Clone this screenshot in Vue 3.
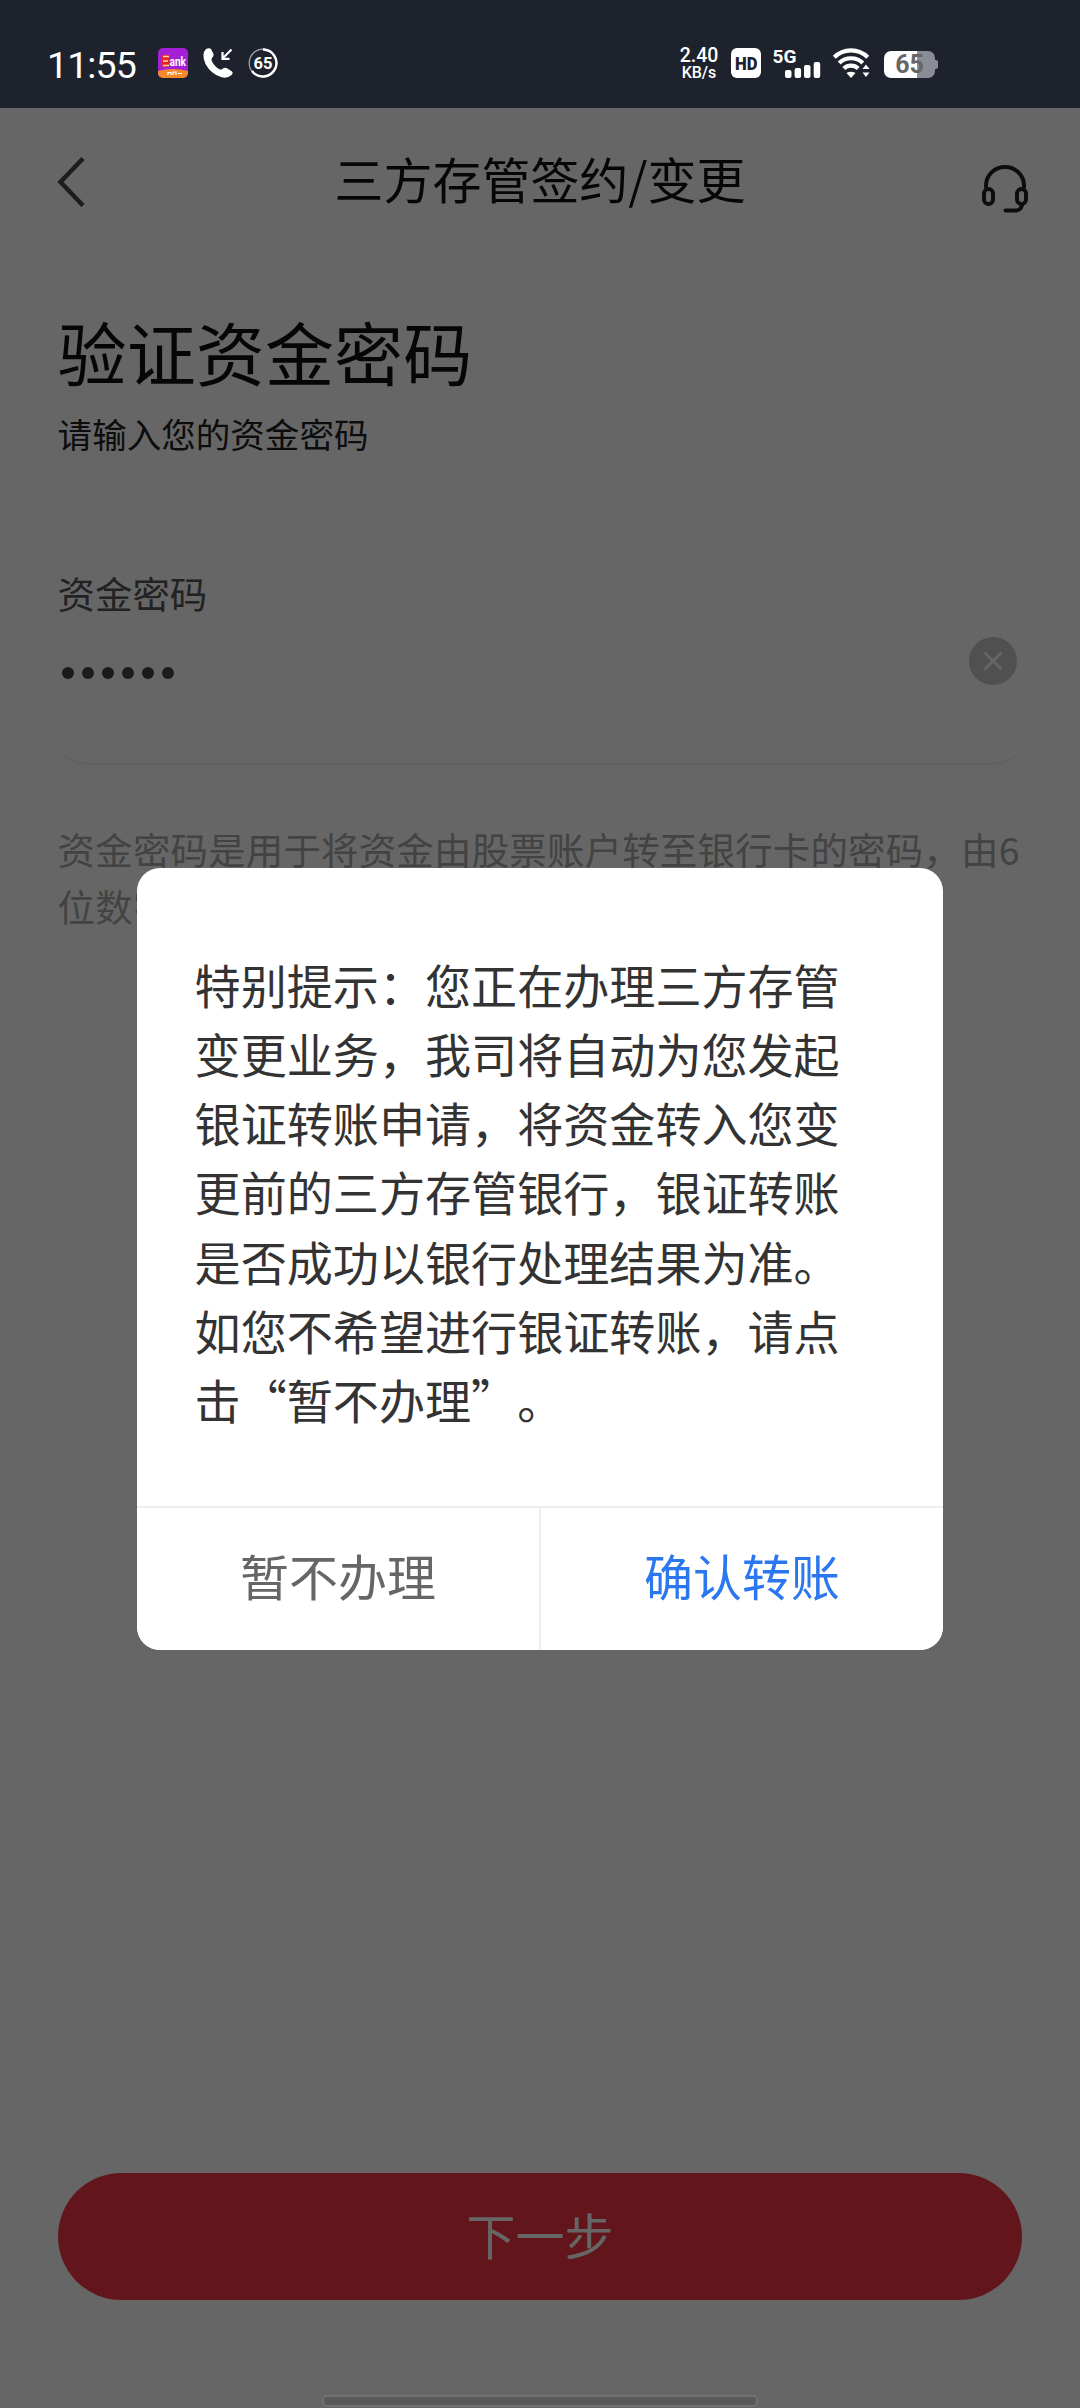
<script setup>
import { ref } from 'vue';

const isOpen = ref(true);
const password = ref('123456');

const hint = '资金密码是用于将资金由股票账户转至银行卡的密码\uff0c由6位数字组成';

const notice =
  '特别提示\uff1a您正在办理三方存管变更业务\uff0c我司将自动为您发起银证转账申请\uff0c' +
  '将资金转入您变更前的三方存管银行\uff0c银证转账是否成功以银行处理结果为准。' +
  '如您不希望进行银证转账\uff0c请点击\u201c暂不办理\u201d。';

const closeModal = () => {
  isOpen.value = false;
};

const clearPassword = () => {
  password.value = '';
};
</script>

<template>
  <div class="screen">
    <header class="status-bar">
      <div class="status-left">
        <span class="clock">11:55</span>
        <svg class="app-icon" width="30" height="30" viewBox="0 0 30 30">
          <defs>
            <clipPath id="app-clip"><rect width="30" height="30" rx="5" /></clipPath>
          </defs>
          <g clip-path="url(#app-clip)">
            <rect width="30" height="30" fill="#a51fd6" />
            <path d="M0 23 Q15 19 30 23 V30 H0 Z" fill="#f58a2c" />
            <rect x="3" y="7" width="8" height="12" fill="#e0252b" />
            <path d="M5 8.500h6M5 13h5M5 17.500h6" stroke="#ffd9a0" stroke-width="1.500" />
            <text x="11.500" y="17.800" textLength="16.500" lengthAdjust="spacingAndGlyphs" class="app-name">ank</text>
            <path d="M10 27v-2.500h3V27M15 27v-3h3V27M20 25.500h4" stroke="#fff" stroke-width="1.200" fill="none" />
          </g>
        </svg>
        <svg class="phone-icon" width="30" height="30" viewBox="0 0 30 30">
          <path d="M3 1 Q6 -.5 8 1 L10.500 6 Q11 8.500 9 10 Q8 11 9 13.500 Q12 19 16 21 Q18.500 22.300 20 20.500 Q22 19.200 24 20.300 L29 23.500 Q30.500 25 28.500 27 Q24 31 18 29 Q8 26 2.500 16 Q-2 6 3 1Z" fill="#fff" />
          <path d="M28.500 1.500 L19.500 10.500 M19.500 4 V10.800 H26.500" fill="none" stroke="#fff" stroke-width="2.200" />
        </svg>
        <svg class="ring-icon" width="30" height="30" viewBox="0 0 30 30">
          <circle cx="15" cy="15" r="13.800" fill="none" stroke="#a5a7ac" stroke-width="1.200" />
          <path d="M15 1.500 A13.500 13.500 0 1 1 4 23" fill="none" stroke="#fff" stroke-width="2.400" />
          <text x="15" y="20.800" text-anchor="middle" class="ring-text">65</text>
        </svg>
      </div>
      <div class="status-right">
        <div class="speed"><span class="speed-num">2.40</span><span class="speed-unit">KB/s</span></div>
        <div class="hd">
          <svg width="30" height="30" viewBox="0 0 30 30">
            <text x="4" y="21.800" textLength="22.500" lengthAdjust="spacingAndGlyphs" class="hd-text">HD</text>
          </svg>
        </div>
        <svg class="signal" width="48" height="30" viewBox="0 0 48 30">
          <text x="-.5" y="14.500" class="signal-text">5G</text>
          <g fill="#fff">
            <rect x="12" y="22" width="6.500" height="8" rx="2" />
            <rect x="21.600" y="20" width="6.500" height="10" rx="2" />
            <rect x="31" y="17" width="6.500" height="13" rx="2" />
            <rect x="40.700" y="14" width="6.500" height="16" rx="2" />
          </g>
        </svg>
        <svg class="wifi" width="37" height="30" viewBox="0 0 37 30">
          <g fill="none" stroke="#fff" stroke-width="4.200">
            <path d="M1.300 9.300 A23.500 23.500 0 0 1 34.700 9.300" />
            <path d="M6.200 15 A17 17 0 0 1 29.800 15" />
            <path d="M10.800 20.500 A10.500 10.500 0 0 1 25.200 20.500" />
          </g>
          <path d="M13.500 25 Q18 22.500 22.500 25 L18 30Z" fill="#fff" />
          <path d="M29.500 21 L33 16.500 L36.500 21Z M29.500 24.500 H36.500 L33 29Z" fill="#fff" />
        </svg>
        <div class="battery"><div class="battery-body">65</div><i class="battery-tip"></i></div>
      </div>
    </header>

    <div class="page">
      <nav class="nav-bar">
        <svg class="back" width="30" height="54" viewBox="0 0 30 54">
          <path d="M27 3.500 L4.500 27 L27 50.500" fill="none" stroke="#4a4a4a" stroke-width="4.500" />
        </svg>
        <h1 class="nav-title">三方存管签约/变更</h1>
        <svg class="service" width="48" height="48" viewBox="0 0 48 48">
          <g fill="none" stroke="#222" stroke-width="4" stroke-linecap="round">
            <path d="M5 22 V20.500 A19 18.500 0 0 1 43 20.500 V22" />
            <rect x="3" y="24" width="9" height="15" rx="4.500" />
            <rect x="36" y="24" width="9" height="15" rx="4.500" />
            <path d="M41 40 Q40 45.500 34.500 45.500 H24.500" />
          </g>
        </svg>
      </nav>

      <main class="content">
        <h2 class="heading">验证资金密码</h2>
        <p class="sub">请输入您的资金密码</p>

        <div class="field-clip">
          <section class="field">
            <label class="field-label">资金密码</label>
            <div class="field-row">
              <div class="dots"><i v-for="n in password.length" :key="n" class="dot"></i></div>
              <svg class="clear" width="48" height="48" viewBox="0 0 48 48" @click="clearPassword">
                <circle cx="24" cy="24" r="24" fill="#c9c9c9" />
                <path d="M15.500 15.500 L32.500 32.500 M32.500 15.500 L15.500 32.500" stroke="#fafafa" stroke-width="3" />
              </svg>
            </div>
          </section>
        </div>

        <p class="hint">{{ hint }}</p>
      </main>

      <button class="next">下一步</button>
      <div class="home-bar"></div>
    </div>

    <div v-if="isOpen" class="modal-overlay">
      <div class="modal">
        <p class="modal-text">{{ notice }}</p>
        <div class="modal-actions">
          <button class="btn btn-cancel" @click="closeModal">暂不办理</button>
          <button class="btn btn-ok" @click="closeModal">确认转账</button>
        </div>
      </div>
    </div>
  </div>
</template>

<style>
body {
  margin: 0;
  background: #fff;
}
</style>

<style scoped>
.screen {
  position: relative;
  display: flex;
  flex-direction: column;
  width: 1080px;
  height: 2408px;
  overflow: hidden;
  font-family: "Noto Sans CJK SC", sans-serif;
  font-weight: 400;
  text-spacing-trim: space-all;
}

h1,
h2,
p {
  margin: 0;
  font-weight: inherit;
}

button {
  border: none;
  padding: 0;
  font: inherit;
}

svg {
  display: block;
  overflow: visible;
  flex: none;
}

/* status bar */
.status-bar {
  display: flex;
  justify-content: space-between;
  box-sizing: border-box;
  height: 108px;
  padding: 48px 142px 0 47px;
  background: #1e222d;
  color: #fff;
  font-family: Roboto, sans-serif;
}

.status-left,
.status-right {
  display: flex;
  height: 30px;
}

.clock {
  width: 111px;
  font-size: 37.500px;
  font-weight: 400;
  line-height: 34px;
  letter-spacing: -0.900px;
}

.phone-icon {
  margin-left: 15px;
}

.ring-icon {
  margin-left: 15px;
}

.app-name {
  fill: #fff;
  font: 700 12px Roboto, sans-serif;
}

.ring-text {
  fill: #fff;
  font: 700 16.500px Roboto, sans-serif;
}

.speed {
  display: flex;
  flex-direction: column;
  align-items: center;
  width: 40px;
  margin-right: 12px;
  font-weight: 500;
}

.speed-num {
  font-size: 19.500px;
  line-height: 15px;
}

.speed-unit {
  font-size: 16px;
  line-height: 19px;
}

.hd {
  width: 30px;
  height: 30px;
  border-radius: 6px;
  background: #fff;
}

.hd-text {
  fill: #1e222d;
  font: 900 19px Roboto, sans-serif;
}

.signal {
  margin-left: 12px;
}

.signal-text {
  fill: #fff;
  font: 700 19px Roboto, sans-serif;
}

.wifi {
  margin-left: 12px;
}

.battery {
  display: flex;
  align-items: center;
  margin: 3px 0 0 14px;
  height: 27px;
}

.battery-body {
  width: 51px;
  height: 27px;
  border-radius: 7px;
  background: linear-gradient(90deg, #fff 65%, #8b8d95 65%);
  color: #666;
  font-size: 25px;
  font-weight: 700;
  line-height: 28px;
  text-align: center;
}

.battery-tip {
  width: 3px;
  height: 9px;
  border-radius: 0 2px 2px 0;
  background: #8b8d95;
}

/* page */
.page {
  display: flex;
  flex: 1;
  flex-direction: column;
  background: #fff;
}

.nav-bar {
  display: flex;
  align-items: center;
  justify-content: space-between;
  height: 147px;
  padding: 0 51px 0 56px;
}

.nav-title {
  padding: 0 0 7px 13px;
  color: #111;
  font-size: 48.960px;
  line-height: 72px;
}

.service {
  margin-top: 14px;
}

.content {
  flex: 1;
  padding: 44px 57.600px 0;
}

.heading {
  color: #111;
  font-size: 69.120px;
  line-height: 104px;
}

.sub {
  margin-top: 4px;
  color: #222;
  font-size: 34.560px;
  line-height: 52px;
}

.field-clip {
  margin-top: 106px;
  overflow: hidden;
}

.field {
  box-sizing: border-box;
  height: 200px;
  margin: 0 -12px;
  padding: 0 12px;
  border-bottom: 2px solid #f1f1f1;
  border-radius: 0 0 43px 43px;
}

.field-label {
  display: block;
  color: #555;
  font-size: 37.440px;
  line-height: 56px;
}

.field-row {
  display: flex;
  align-items: center;
  justify-content: space-between;
  height: 48px;
  margin-top: 16px;
  padding: 0 5px 0 4px;
}

.dots {
  display: flex;
  gap: 8px;
  margin-top: 23px;
}

.dot {
  width: 12px;
  height: 12px;
  border-radius: 50%;
  background: #444;
}

.hint {
  margin: 56px -4px 0 0;
  color: #a8a8a8;
  font-size: 37.440px;
  line-height: 57px;
  letter-spacing: 0.220px;
}

.next {
  flex: none;
  box-sizing: border-box;
  height: 127px;
  margin: 0 58px;
  padding-bottom: 6px;
  border-radius: 64px;
  background: #f53541;
  color: #fff;
  font-size: 48.960px;
}

/* system gesture bar stays above the overlay */
.home-bar {
  position: relative;
  z-index: 2;
  flex: none;
  box-sizing: border-box;
  width: 436px;
  height: 12px;
  margin: 95px auto 1px;
  border: 2px solid #727272;
  border-radius: 5px;
  background: #595959;
}

/* modal */
.modal-overlay {
  position: absolute;
  top: 108px;
  left: 0;
  right: 0;
  bottom: 0;
  display: flex;
  align-items: flex-start;
  justify-content: center;
  background: rgba(0, 0, 0, 0.6);
}

.modal {
  width: 806px;
  height: 782px;
  margin-top: 760px;
  display: flex;
  flex-direction: column;
  overflow: hidden;
  border-radius: 23px;
  background: #fff;
}

.modal-text {
  flex: 1;
  padding: 82px 57.600px 0;
  color: #333;
  font-size: 46.080px;
  line-height: 69.120px;
}

.modal-actions {
  display: flex;
  height: 142px;
  border-top: 2px solid #eee;
}

.btn {
  flex: 1;
  padding-bottom: 9px;
  background: #fff;
  font-size: 48.960px;
}

.btn-cancel {
  border-right: 2px solid #eee;
  color: #666;
}

.btn-ok {
  color: #2b77ef;
}
</style>
